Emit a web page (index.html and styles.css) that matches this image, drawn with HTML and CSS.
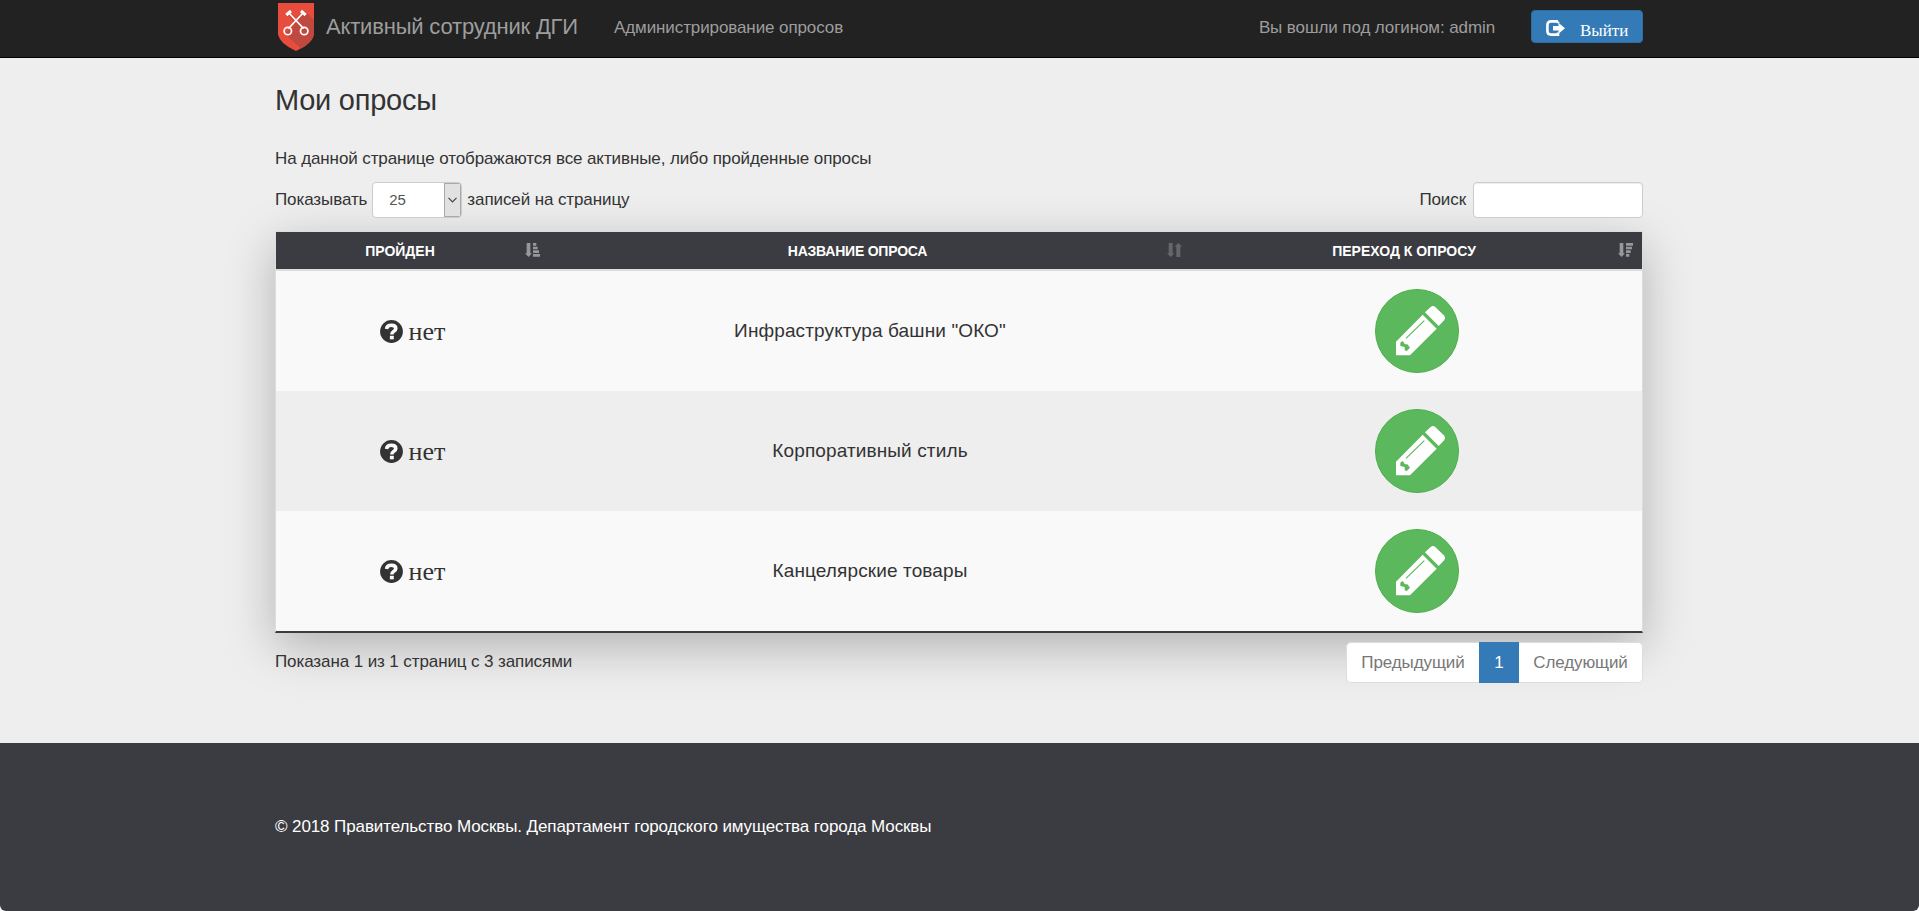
FILE: index.html
```html
<!DOCTYPE html>
<html lang="ru">
<head>
<meta charset="utf-8">
<title>Активный сотрудник ДГИ</title>
<link rel="stylesheet" href="styles.css">
</head>
<body>
<svg class="defs" width="0" height="0">
  <symbol id="pencil" viewBox="15 357 252 252">
    <circle cx="141" cy="483" r="124.5" fill="#5cb85c" stroke="#4cae4c" stroke-width="3"/>
    <path fill="#fff" d="M78 556V515L158 434L200 476L120 556ZM165 427L182 411Q188 406 195 410L223 437Q227 443 223 450L206 468Z"/>
    <path fill="none" stroke="#5cb85c" stroke-width="3.5" d="M108 505L163 452"/>
    <path fill="#5cb85c" d="M91 518L98 513L105 523L112 523L120 533L110 543L104 541V531L91 528Z"/>
  </symbol>
  <symbol id="question" viewBox="0 0 23 23">
    <circle cx="11.5" cy="11.5" r="11.4" fill="#333"/>
    <path fill="none" stroke="#f9f9f9" stroke-width="3.6" d="M6.6 9C6.8 6.4 8.6 5.2 11.4 5.2C14.400 5.2 15.800 6.600 15.800 8.500C15.800 11.300 11.800 11 11.800 14.600"/>
    <path fill="#f9f9f9" d="M9.900 15.800h3.900v3.500H9.900z"/>
  </symbol>
</svg>
<header class="navbar">
  <div class="container nav-row">
    <a class="brand">
      <svg class="shield" viewBox="0 0 36 48">
        <path fill="#e74c3c" d="M0 0H36V31.5Q34 41 18 48Q2 41 0 31.5Z"/>
        <path fill="#c0493f" d="M27 8L36 17V31.5Q34 40 23 45.5L7 31L17 21L9 10L12 9L18 15L24 9Z"/>
        <g fill="none" stroke="#fff" stroke-width="1.7">
          <path d="M11.5 10.5L25.5 25.5M24.5 10.5L10.5 25.5"/>
          <circle cx="9.800" cy="28" r="3.700"/>
          <circle cx="26.200" cy="28" r="3.700"/>
          <path d="M8.3 12L13 8M23 8L27.7 12" stroke-width="3"/>
        </g>
      </svg>
      <span>Активный сотрудник ДГИ</span>
    </a>
    <a class="nav-link">Администрирование опросов</a>
    <span class="login">Вы вошли под логином: admin</span>
    <a class="logout">
      <svg viewBox="0 0 19 16">
        <path fill="none" stroke="#fff" stroke-width="2.6" d="M12 1.4H5Q1.4 1.4 1.4 5V11Q1.4 14.6 5 14.6H12V12.5M12 1.4V3.2"/>
        <path fill="#fff" d="M7 6H12.5V2.7L19 8.3L12.5 13.8V10.6H7Z"/>
      </svg>
      <span>Выйти</span>
    </a>
  </div>
</header>
<main>
  <div class="container">
    <h1>Мои опросы</h1>
    <p class="intro">На данной странице отображаются все активные, либо пройденные опросы</p>
    <div class="controls">
      <span>Показывать</span>
      <div class="select"><span>25</span><i><svg viewBox="0 0 9 6"><path fill="none" stroke="#444" stroke-width="1.2" d="M.5 .8L4.5 4.8L8.5 .8"/></svg></i></div>
      <span>записей на страницу</span>
      <label class="search"><span>Поиск</span><input type="text"></label>
    </div>
    <div class="table">
      <div class="row head">
        <div>ПРОЙДЕН<svg class="sort" viewBox="0 0 45 42"><path d="M5 0H16V31H21L10.500 42L0 31H5ZM24 0H34V8H24ZM24 11H38V19H24ZM24 22H42V30H24ZM24 33H45V41H24Z"/></svg></div>
        <div class="name">НАЗВАНИЕ ОПРОСА<svg class="sort dim" viewBox="0 0 45 42"><path d="M5 0H17V31H22L11 42L0 31H5ZM28 42V11H23L34 0L45 11H40V42Z"/></svg></div>
        <div>ПЕРЕХОД К ОПРОСУ<svg class="sort" viewBox="0 0 45 42"><path d="M5 0H16V31H21L10.500 42L0 31H5ZM24 0H45V8H24ZM24 11H42V19H24ZM24 22H38V30H24ZM24 33H34V41H24Z"/></svg></div>
      </div>
      <div class="row">
        <div class="status"><svg><use href="#question"/></svg><span>нет</span></div>
        <div>Инфраструктура башни "ОКО"</div>
        <div><svg class="edit"><use href="#pencil"/></svg></div>
      </div>
      <div class="row even">
        <div class="status"><svg><use href="#question"/></svg><span>нет</span></div>
        <div>Корпоративный стиль</div>
        <div><svg class="edit"><use href="#pencil"/></svg></div>
      </div>
      <div class="row">
        <div class="status"><svg><use href="#question"/></svg><span>нет</span></div>
        <div>Канцелярские товары</div>
        <div><svg class="edit"><use href="#pencil"/></svg></div>
      </div>
    </div>
    <div class="summary">
      <span>Показана 1 из 1 страниц с 3 записями</span>
      <div class="pager"><a class="prev">Предыдущий</a><a class="current">1</a><a class="next">Следующий</a></div>
    </div>
  </div>
</main>
<footer class="footer"><div class="container">© 2018 Правительство Москвы. Департамент городского имущества города Москвы</div></footer>
</body>
</html>
```
FILE: styles.css
```css
* { box-sizing: border-box; }
html { background: #fff; }
body {
  margin: 0;
  height: 911px;
  display: flex;
  flex-direction: column;
  overflow: hidden;
  font: 17px/24px "Liberation Sans", Arial, sans-serif;
  letter-spacing: -.1px;
  color: #333;
  white-space: nowrap;
}
.defs { position: absolute; }
.container { width: 1368px; margin: 0 0 0 275px; }
.navbar { flex: none; height: 58px; background: #222; border-bottom: 1px solid #000; color: #9d9d9d; }
.nav-row { display: flex; align-items: flex-start; }
.brand { display: flex; width: 339px; padding-left: 3px; font-size: 22px; letter-spacing: -.18px; }
.brand span { margin: 15px 0 0 12px; }
.shield { width: 36px; height: 48px; margin-top: 3px; flex: none; }
.nav-link { margin-top: 16px; }
.login { margin: 16px 36px 0 auto; }
.logout {
  display: flex;
  width: 112px;
  height: 33px;
  margin-top: 10px;
  padding: 9px 0 0 14px;
  background: #337ab7;
  border: 1px solid #2e6da4;
  border-radius: 4px;
  color: #fff;
  font: 17px/20px "Liberation Serif", serif;
  letter-spacing: 0;
}
.logout svg { width: 19px; height: 16px; flex: none; }
.logout span { margin: 1px 0 0 15px; }
main { flex: none; height: 685px; background: #eee; overflow: hidden; }
h1 { margin: 24px 0 0; font: 29px/36px "Liberation Sans", Arial, sans-serif; letter-spacing: -.25px; }
.intro { margin: 29px 0 0; }
.controls { display: flex; align-items: center; height: 36px; margin: 11px 0 13px; gap: 5px; }
.select {
  display: flex;
  width: 90px;
  height: 36px;
  border: 1px solid #ccc;
  border-radius: 4px;
  background: #fff;
  font-size: 15px;
  line-height: 33px;
  color: #555;
  overflow: hidden;
}
.select span { flex: 1; padding-left: 16px; }
.select i { width: 17px; border: 1px solid #aaa; background: #e1e1e1; display: flex; align-items: center; justify-content: center; }
.select svg { width: 9px; height: 6px; }
.search { display: flex; align-items: center; gap: 7px; margin-left: auto; }
.search input { width: 170px; height: 36px; border: 1px solid #ccc; border-radius: 4px; background: #fff; box-shadow: inset 0 1px 1px rgba(0,0,0,.075); }
.table {
  height: 402px;
  border: solid #ddd;
  border-width: 1px 1px 0;
  border-bottom: 2px solid #3b3c41;
  box-shadow: 0 14px 45px rgba(0,0,0,.25);
}
.row { display: grid; grid-template-columns: 273px 642px 1fr; height: 120px; background: #f9f9f9; font-size: 19px; letter-spacing: .12px; }
.row > div { display: flex; align-items: center; justify-content: center; }
.even { background: #eee; }
.head { height: 39px; background: #3b3c41; border-bottom: 2px solid #ddd; color: #fff; font-size: 14px; font-weight: bold; letter-spacing: 0; }
.head > div { position: relative; padding: 0 30px 0 5px; }
.head .name { letter-spacing: -.22px; }
.sort { position: absolute; right: 9px; top: 11px; width: 15px; height: 14px; fill: #96979a; }
.dim { fill: #64666a; }
.row .status { gap: 6px; font: 26px/28px "Liberation Serif", serif; letter-spacing: 0; }
.status svg { width: 23px; height: 23px; }
.status span { margin-top: 1px; }
.edit { width: 84px; height: 84px; }
.summary { position: relative; display: flex; justify-content: space-between; padding-top: 9px; }
.summary > span { margin-top: 8px; }
.pager { display: flex; height: 41px; line-height: 39px; color: #777; }
.pager a { text-align: center; background: #fff; border: 1px solid #ddd; }
.prev { width: 134px; border-radius: 5px 0 0 5px; }
.pager .current { width: 40px; margin-left: -1px; background: #337ab7; border-color: #337ab7; color: #fff; }
.pager .next { width: 124px; border-left: 0; border-radius: 0 5px 5px 0; }
.footer { flex: none; height: 168px; padding-top: 72px; background: #3b3c41; border-radius: 0 0 6px 6px; color: #fff; }
```
